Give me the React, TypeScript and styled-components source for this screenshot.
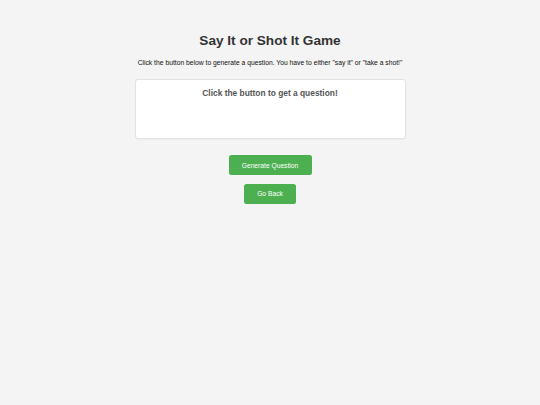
import styled, { createGlobalStyle } from 'styled-components';

const GlobalStyle = createGlobalStyle`
  html, body {
    margin: 0;
    padding: 0;
    background: #f4f4f4;
    font-family: "Liberation Sans", Arial, sans-serif;
  }
`;

const Page = styled.div`
  display: flex;
  flex-direction: column;
  align-items: center;
  padding-top: 33px;
  text-align: center;
`;

const Title = styled.h1`
  margin: 0;
  font-size: 13.6px;
  line-height: 16px;
  font-weight: 700;
  color: #333;
`;

const Intro = styled.p`
  margin: 9.5px 0 0;
  font-size: 6.75px;
  line-height: 8px;
  color: #111;
`;

const QuestionBox = styled.div`
  box-sizing: border-box;
  width: 271px;
  height: 60px;
  margin-top: 12px;
  padding-top: 8px;
  background: #fff;
  border: 1px solid #e2e2e2;
  border-radius: 3px;
  box-shadow: 0 1px 2px rgba(0, 0, 0, 0.04);
`;

const QuestionText = styled.div`
  font-size: 8.4px;
  line-height: 10px;
  font-weight: 700;
  color: #555;
`;

const Button = styled.button<{ $width: number; $gap: number }>`
  box-sizing: border-box;
  width: ${(p) => p.$width}px;
  height: 20px;
  margin-top: ${(p) => p.$gap}px;
  padding: 0;
  border: none;
  border-radius: 2.5px;
  background: #4caf50;
  color: #fff;
  font-family: inherit;
  font-size: 6.7px;
  cursor: pointer;
`;

export default function App() {
  return (
    <>
      <GlobalStyle />
      <Page>
        <Title>Say It or Shot It Game</Title>
        <Intro>
          Click the button below to generate a question. You have to either "say it" or "take a
          shot!"
        </Intro>
        <QuestionBox>
          <QuestionText>Click the button to get a question!</QuestionText>
        </QuestionBox>
        <Button $width={83} $gap={16.5}>
          Generate Question
        </Button>
        <Button $width={52} $gap={8.5}>
          Go Back
        </Button>
      </Page>
    </>
  );
}
